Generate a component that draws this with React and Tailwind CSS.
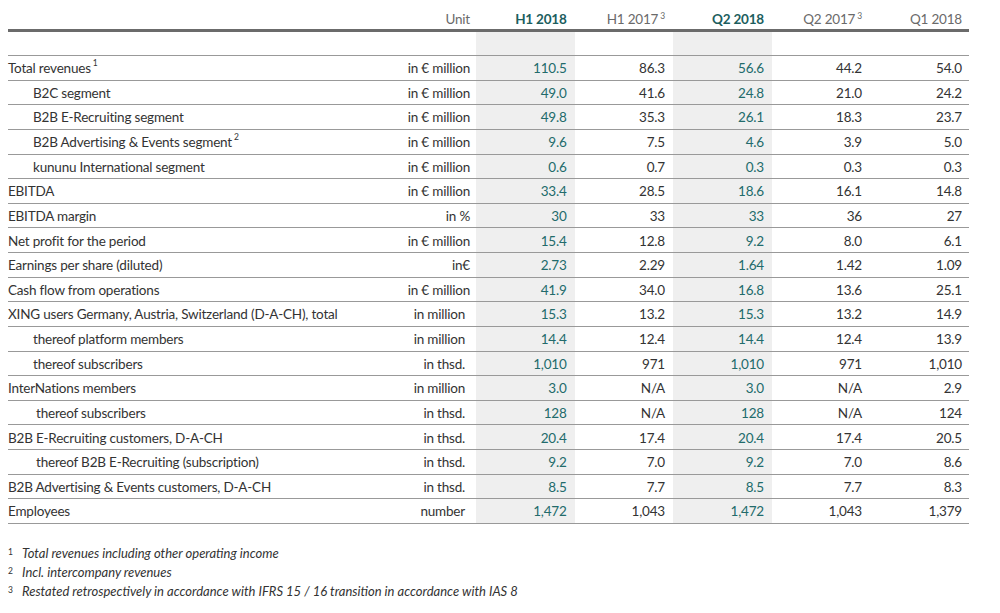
import React from "react";

const rows = [
  { label: "Total revenues", sup: "1", unit: "in € million", v: ["110.5", "86.3", "56.6", "44.2", "54.0"] },
  { label: "B2C segment", indent: 1, unit: "in € million", v: ["49.0", "41.6", "24.8", "21.0", "24.2"] },
  { label: "B2B E-Recruiting segment", indent: 1, unit: "in € million", v: ["49.8", "35.3", "26.1", "18.3", "23.7"] },
  { label: "B2B Advertising & Events segment", sup: "2", indent: 1, unit: "in € million", v: ["9.6", "7.5", "4.6", "3.9", "5.0"] },
  { label: "kununu International segment", indent: 1, unit: "in € million", v: ["0.6", "0.7", "0.3", "0.3", "0.3"] },
  { label: "EBITDA", unit: "in € million", v: ["33.4", "28.5", "18.6", "16.1", "14.8"] },
  { label: "EBITDA margin", unit: "in %", v: ["30", "33", "33", "36", "27"] },
  { label: "Net profit for the period", unit: "in € million", v: ["15.4", "12.8", "9.2", "8.0", "6.1"] },
  { label: "Earnings per share (diluted)", unit: "in€", v: ["2.73", "2.29", "1.64", "1.42", "1.09"] },
  { label: "Cash flow from operations", unit: "in € million", v: ["41.9", "34.0", "16.8", "13.6", "25.1"] },
  { label: "XING users Germany, Austria, Switzerland (D-A-CH), total", unit: "in million", short: true, v: ["15.3", "13.2", "15.3", "13.2", "14.9"] },
  { label: "thereof platform members", indent: 1, unit: "in million", short: true, v: ["14.4", "12.4", "14.4", "12.4", "13.9"] },
  { label: "thereof subscribers", indent: 1, unit: "in thsd.", short: true, v: ["1,010", "971", "1,010", "971", "1,010"] },
  { label: "InterNations members", unit: "in million", short: true, v: ["3.0", "N/A", "3.0", "N/A", "2.9"] },
  { label: "thereof subscribers", indent: 2, unit: "in thsd.", short: true, v: ["128", "N/A", "128", "N/A", "124"] },
  { label: "B2B E-Recruiting customers, D-A-CH", unit: "in thsd.", short: true, v: ["20.4", "17.4", "20.4", "17.4", "20.5"] },
  { label: "thereof B2B E-Recruiting (subscription)", indent: 2, unit: "in thsd.", short: true, v: ["9.2", "7.0", "9.2", "7.0", "8.6"] },
  { label: "B2B Advertising & Events customers, D-A-CH", unit: "in thsd.", short: true, v: ["8.5", "7.7", "8.5", "7.7", "8.3"] },
  { label: "Employees", unit: "number", short: true, v: ["1,472", "1,043", "1,472", "1,043", "1,379"] },
];

const grid = "grid grid-cols-[348px_120px_98.6px_98.4px_99px_98px_98px]";

function Sup({ children }) {
  return <span className="relative -top-[5px] ml-[2px] text-[8.5px]">{children}</span>;
}

export default function App() {
  return (
    <div
      className="w-[1000px] h-[613px] bg-white text-[#333] text-[13.5px] tracking-[-0.2px]"
      style={{ fontFamily: "Lato, 'Noto Sans', sans-serif" }}
    >
      <div className="ml-[8px] w-[961px]">
        <div className={`${grid} h-[32px] border-b-[3px] border-[#6b6b6b] items-center text-[#6a6a6a]`}>
          <div />
          <div className="text-right pr-[6px] pt-[9px]">Unit</div>
          <div className="text-right pr-[8px] pt-[9px] font-bold text-[#1c5e5e]">H1 2018</div>
          <div className="text-right pr-[8px] pt-[9px]">H1 2017<Sup>3</Sup></div>
          <div className="text-right pr-[8px] pt-[9px] font-bold text-[#1c5e5e]">Q2 2018</div>
          <div className="text-right pr-[8px] pt-[9px]">Q2 2017<Sup>3</Sup></div>
          <div className="text-right pr-[6px] pt-[9px]">Q1 2018</div>
        </div>
        <div className={`${grid} h-[24px] border-b border-[#999]`}>
          <div />
          <div />
          <div className="bg-[#efefef]" />
          <div />
          <div className="bg-[#efefef]" />
          <div />
          <div />
        </div>
        {rows.map((r, i) => (
          <div key={i} className={`${grid} h-[24.63px] border-b border-[#999] items-stretch`}>
            <div
              className={`flex items-center whitespace-nowrap pt-[1px] ${
                r.indent === 1 ? "pl-[25px]" : r.indent === 2 ? "pl-[28px]" : ""
              }`}
            >
              {r.label}
              {r.sup && <Sup>{r.sup}</Sup>}
            </div>
            <div className={`flex items-center justify-end pt-[1px] ${r.short ? "pr-[11px]" : "pr-[6px]"}`}>{r.unit}</div>
            {r.v.map((x, j) => (
              <div
                key={j}
                className={`flex items-center justify-end pt-[1px] ${j === 4 ? "pr-[6px]" : "pr-[8px]"} ${
                  j === 0 || j === 2 ? "bg-[#efefef] text-[#226b6b]" : ""
                }`}
              >
                {x}
              </div>
            ))}
          </div>
        ))}
        <div className="mt-[22px] flex flex-col gap-[3px] italic text-[13px] tracking-normal text-[#333]">
          {[
            ["1", "Total revenues including other operating income"],
            ["2", "Incl. intercompany revenues"],
            ["3", "Restated retrospectively in accordance with IFRS 15 / 16 transition in accordance with IAS 8"],
          ].map(([n, t]) => (
            <div key={n} className="flex h-[16px] items-center">
              <span className="w-[14px] text-[8.5px] not-italic -mt-[4px]">{n}</span>
              <span>{t}</span>
            </div>
          ))}
        </div>
      </div>
    </div>
  );
}
